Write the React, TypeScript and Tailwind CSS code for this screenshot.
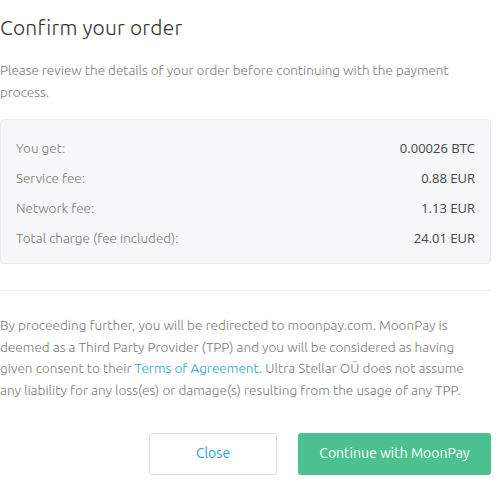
import React from 'react';

const rows = [
  { label: 'You get:', value: '0.00026 BTC' },
  { label: 'Service fee:', value: '0.88 EUR' },
  { label: 'Network fee:', value: '1.13 EUR' },
  { label: 'Total charge (fee included):', value: '24.01 EUR' },
];

export default function App() {
  return (
    <div className="w-[491px] bg-white pt-[13px] font-['Ubuntu','Open_Sans',sans-serif] text-[#444]">
      <h1 className="text-[21px] font-light leading-[28px] text-[#333] tracking-[0.2px]">Confirm your order</h1>

      <p className="mt-[18px] text-[13.5px] font-light leading-[22px] text-[#7a7a7a]">
        Please review the details of your order before continuing with the payment process.
      </p>

      <div className="mt-[16px] rounded-[4px] border border-[#e8ecee] bg-[#f5f7f8] px-[15px] pt-[13px] pb-[10px]">
        {rows.map((r) => (
          <div key={r.label} className="flex h-[30px] items-center justify-between text-[13.5px] leading-[22px]">
            <span className="font-light text-[#7a7a7a]">{r.label}</span>
            <span className="font-['Open_Sans',sans-serif] text-[13px] text-[#444]">{r.value}</span>
          </div>
        ))}
      </div>

      <div className="mt-[26px] h-px bg-[#eef0f1]" />

      <p className="mt-[24px] pr-[6px] text-[13.6px] font-light leading-[21.7px] text-[#7a7a7a]">
        By proceeding further, you will be redirected to moonpay.com. MoonPay is deemed as a Third Party Provider
        (TPP) and you will be considered as having given consent to their{' '}
        <a className="text-[#2aa3c9]">Terms of Agreement</a>. Ultra Stellar OÜ does not assume any liability for
        any loss(es) or damage(s) resulting from the usage of any TPP.
      </p>

      <div className="mt-[31px] flex justify-end gap-[21px] pb-[10px]">
        <button className="h-[42px] w-[128px] rounded-[3px] border border-[#dcdcdc] bg-white text-[14px] text-[#2aa3c9]">
          Close
        </button>
        <button className="h-[42px] w-[193px] rounded-[3px] bg-[#4bc190] text-[14px] text-white">
          Continue with MoonPay
        </button>
      </div>
    </div>
  );
}
